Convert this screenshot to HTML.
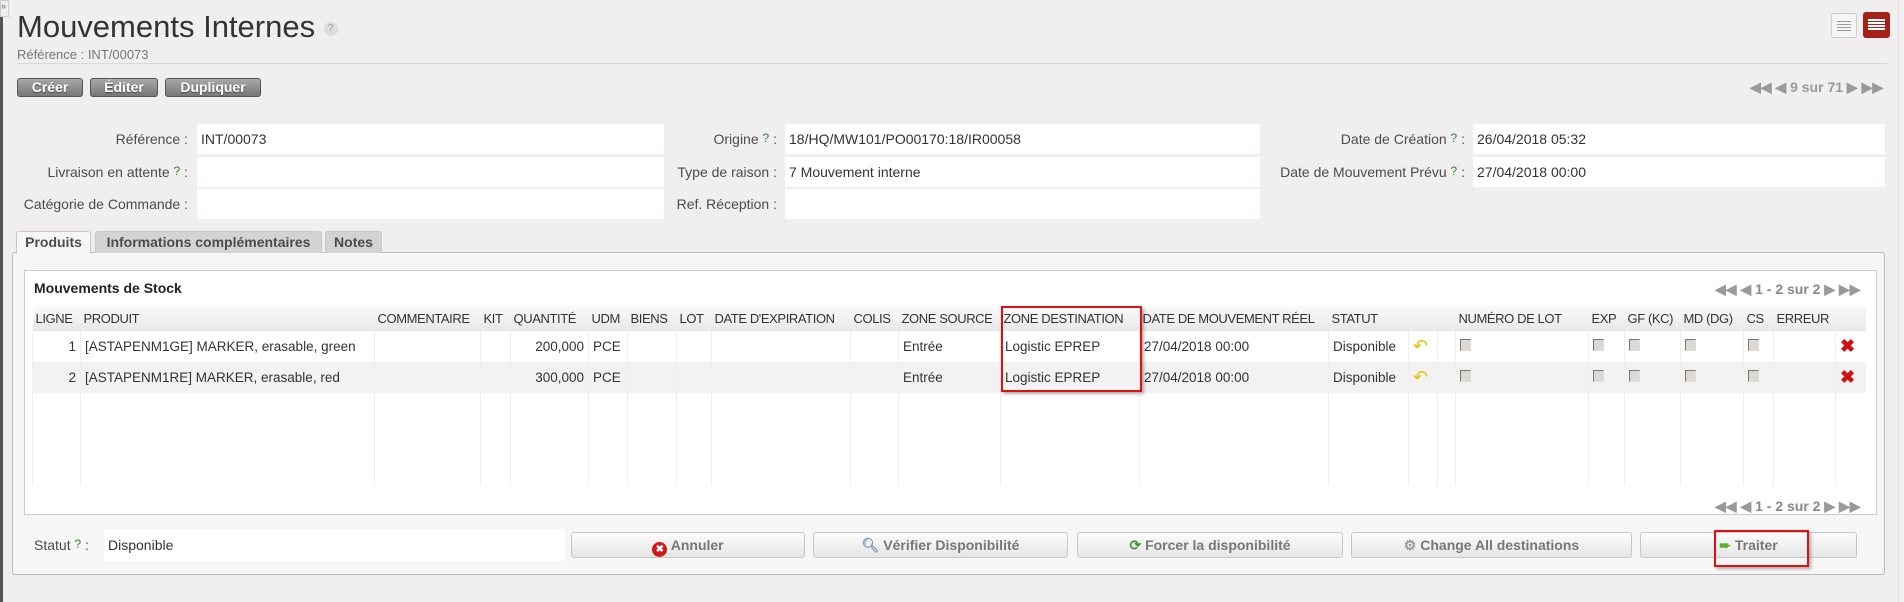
<!DOCTYPE html>
<html><head><meta charset="utf-8"><style>
*{box-sizing:border-box;margin:0;padding:0}
body{width:1904px;height:602px;background:#f0eeee;font-family:"Liberation Sans",sans-serif;font-size:14px;color:#4c4c4c;position:relative;overflow:hidden}
.a{position:absolute}
.btn{position:absolute;top:78px;height:19px;border:1px solid #555;border-radius:3px;background:linear-gradient(#a8a8a8,#777);color:#fff;font-weight:bold;font-size:14px;text-align:center;line-height:17px;text-shadow:0 1px 1px #444}
.lbl{position:absolute;text-align:right;font-size:14px;color:#4c4c4c}
.inp{position:absolute;background:#fff;height:30px;line-height:30px;padding-left:4px;font-size:14px;color:#333}
.q{color:#2a8a2a;font-size:12px;vertical-align:top}
.tab{position:absolute;top:231px;height:22px;border:1px solid #c8c8c8;border-bottom:none;border-radius:3px 3px 0 0;background:#d4d2d2;font-weight:bold;font-size:14px;line-height:20px;text-align:center;color:#4c4c4c}
table{border-collapse:collapse;position:absolute;left:32px;top:306px;width:1833px;font-size:13.5px;table-layout:fixed}
th{height:25px;font-weight:normal;text-align:left;padding:0 3px;color:#333;background:linear-gradient(#fafafa,#e8e8e8);white-space:nowrap;font-size:13px;letter-spacing:-0.4px;overflow:hidden}
td{height:31px;border-left:1px solid #eee;padding:0 4px;white-space:nowrap;color:#333;overflow:hidden}
tr.o td{background:#fff}tr.e td{background:#f2f2f2}
.cb{display:inline-block;width:11px;height:12px;border:1px solid #777;background:#ddd8d0;border-right-color:#ddd;border-bottom-color:#ddd}
.bb{position:absolute;top:532px;height:26px;border:1px solid #c8c8c8;border-radius:3px;background:linear-gradient(#fbfbfb,#e6e6e6);color:#777;font-weight:bold;font-size:14px;line-height:24px;text-align:center}
.pg{position:absolute;color:#999;font-size:14px;font-weight:bold}
</style></head><body>
<div class="a" style="left:0;top:0;width:3px;height:602px;background:#555"></div>
<div class="a" style="left:0;top:0;width:9px;height:17px;background:#eee;border:1px solid #ccc;font-size:9px;color:#666">»</div>
<div class="a" style="left:1898px;top:0;width:1px;height:602px;background:#ddd"></div>
<div class="a" style="left:17px;top:9px;font-size:31px;color:#333">Mouvements Internes <span style="display:inline-block;width:14px;height:14px;border-radius:7px;background:#ddd;color:#999;font-size:10px;text-align:center;line-height:14px;vertical-align:middle">?</span></div>
<div class="a" style="left:17px;top:47px;font-size:13px;color:#777">Référence : INT/00073</div>
<div class="a" style="left:17px;top:63px;width:1870px;height:1px;background:#d8d8d8"></div>
<div class="a" style="left:1831px;top:13px;width:26px;height:25px;border:1px solid #ccc;border-radius:3px;background:#f6f6f6"><div style="margin:7px 5px;height:10px;background:repeating-linear-gradient(#999 0 1px,#f6f6f6 1px 3px)"></div></div>
<div class="a" style="left:1863px;top:12px;width:27px;height:26px;border-radius:3px;background:#a52218"><div style="margin:7px 5px;height:11px;background:repeating-linear-gradient(#fff 0 2px,#a52218 2px 3px)"></div></div>
<div class="btn" style="left:17px;width:66px">Créer</div>
<div class="btn" style="left:90px;width:68px">Éditer</div>
<div class="btn" style="left:165px;width:96px">Dupliquer</div>
<div class="pg" style="left:1750px;top:79px">◀◀ ◀ <span style="font-size:14px">9 sur 71</span> ▶ ▶▶</div>

<div class="lbl" style="left:20px;width:168px;top:131px">Référence :</div>
<div class="inp" style="left:197px;top:124px;width:467px">INT/00073</div>
<div class="lbl" style="left:20px;width:168px;top:164px">Livraison en attente <span class="q">?</span> :</div>
<div class="inp" style="left:197px;top:157px;width:467px"></div>
<div class="lbl" style="left:20px;width:168px;top:196px">Catégorie de Commande :</div>
<div class="inp" style="left:197px;top:189px;width:467px"></div>

<div class="lbl" style="left:600px;width:177px;top:131px">Origine <span class="q">?</span> :</div>
<div class="inp" style="left:785px;top:124px;width:475px">18/HQ/MW101/PO00170:18/IR00058</div>
<div class="lbl" style="left:600px;width:177px;top:164px">Type de raison :</div>
<div class="inp" style="left:785px;top:157px;width:475px">7 Mouvement interne</div>
<div class="lbl" style="left:600px;width:177px;top:196px">Ref. Réception :</div>
<div class="inp" style="left:785px;top:189px;width:475px"></div>

<div class="lbl" style="left:1200px;width:265px;top:131px">Date de Création <span class="q">?</span> :</div>
<div class="inp" style="left:1473px;top:124px;width:412px">26/04/2018 05:32</div>
<div class="lbl" style="left:1200px;width:265px;top:164px">Date de Mouvement Prévu <span class="q">?</span> :</div>
<div class="inp" style="left:1473px;top:157px;width:412px">27/04/2018 00:00</div>

<div class="a" style="left:12px;top:252px;width:1873px;height:323px;border:1px solid #bbb;border-radius:3px;background:#f6f6f6"></div>
<div class="tab" style="left:16px;width:75px;background:#f6f6f6;height:23px">Produits</div>
<div class="tab" style="left:95px;width:227px">Informations complémentaires</div>
<div class="tab" style="left:325px;width:57px">Notes</div>

<div class="a" style="left:24px;top:270px;width:1853px;height:245px;border:1px solid #ccc;background:#fff"></div>
<div class="a" style="left:34px;top:280px;font-weight:bold;color:#222;font-size:14px">Mouvements de Stock</div>
<div class="pg" style="left:1715px;top:281px;font-size:14px">◀◀ ◀ <span style="color:#888">1 - 2 sur 2</span> ▶ ▶▶</div>
<div class="pg" style="left:1715px;top:498px;font-size:14px">◀◀ ◀ <span style="color:#888">1 - 2 sur 2</span> ▶ ▶▶</div>

<table>
<colgroup><col style="width:48px"><col style="width:294px"><col style="width:106px"><col style="width:30px"><col style="width:78px"><col style="width:39px"><col style="width:49px"><col style="width:35px"><col style="width:139px"><col style="width:48px"><col style="width:102px"><col style="width:139px"><col style="width:189px"><col style="width:80px"><col style="width:29px"><col style="width:18px"><col style="width:133px"><col style="width:36px"><col style="width:56px"><col style="width:63px"><col style="width:30px"><col style="width:62px"><col style="width:30px"></colgroup>
<tr><th>LIGNE</th><th>PRODUIT</th><th>COMMENTAIRE</th><th>KIT</th><th>QUANTITÉ</th><th>UDM</th><th>BIENS</th><th>LOT</th><th>DATE D'EXPIRATION</th><th>COLIS</th><th>ZONE SOURCE</th><th>ZONE DESTINATION</th><th>DATE DE MOUVEMENT RÉEL</th><th>STATUT</th><th></th><th></th><th>NUMÉRO DE LOT</th><th>EXP</th><th>GF (KC)</th><th>MD (DG)</th><th>CS</th><th>ERREUR</th><th></th></tr>
<tr class="o"><td style="text-align:right">1</td><td>[ASTAPENM1GE] MARKER, erasable, green</td><td></td><td></td><td style="text-align:right">200,000</td><td>PCE</td><td></td><td></td><td></td><td></td><td>Entrée</td><td>Logistic EPREP</td><td>27/04/2018 00:00</td><td>Disponible</td><td style="color:#e8c000;font-size:18px">↶</td><td></td><td><span class="cb"></span></td><td><span class="cb"></span></td><td><span class="cb"></span></td><td><span class="cb"></span></td><td><span class="cb"></span></td><td></td><td style="color:#d01010;font-weight:bold;font-size:18px">✖</td></tr>
<tr class="e"><td style="text-align:right">2</td><td>[ASTAPENM1RE] MARKER, erasable, red</td><td></td><td></td><td style="text-align:right">300,000</td><td>PCE</td><td></td><td></td><td></td><td></td><td>Entrée</td><td>Logistic EPREP</td><td>27/04/2018 00:00</td><td>Disponible</td><td style="color:#e8c000;font-size:18px">↶</td><td></td><td><span class="cb"></span></td><td><span class="cb"></span></td><td><span class="cb"></span></td><td><span class="cb"></span></td><td><span class="cb"></span></td><td></td><td style="color:#d01010;font-weight:bold;font-size:18px">✖</td></tr>
<tr class="o"><td></td><td></td><td></td><td></td><td></td><td></td><td></td><td></td><td></td><td></td><td></td><td></td><td></td><td></td><td></td><td></td><td></td><td></td><td></td><td></td><td></td><td></td><td></td></tr>
<tr class="o"><td></td><td></td><td></td><td></td><td></td><td></td><td></td><td></td><td></td><td></td><td></td><td></td><td></td><td></td><td></td><td></td><td></td><td></td><td></td><td></td><td></td><td></td><td></td></tr>
<tr class="o"><td></td><td></td><td></td><td></td><td></td><td></td><td></td><td></td><td></td><td></td><td></td><td></td><td></td><td></td><td></td><td></td><td></td><td></td><td></td><td></td><td></td><td></td><td></td></tr>
</table>
<div class="a" style="left:1001px;top:306px;width:141px;height:86px;border:2px solid #e01010;box-shadow:2px 2px 3px rgba(0,0,0,.3)"></div>

<div class="a" style="left:34px;top:537px">Statut <span class="q">?</span> :</div>
<div class="inp" style="left:104px;top:529px;width:461px;height:32px;line-height:32px">Disponible</div>
<div class="bb" style="left:571px;width:234px"><span style="display:inline-block;width:15px;height:15px;border-radius:8px;background:#d01818;color:#fff;font-size:10px;line-height:15px;vertical-align:-2px">✖</span> Annuler</div>
<div class="bb" style="left:813px;width:255px"><span style="color:#7a9ab8">🔍︎</span> Vérifier Disponibilité</div>
<div class="bb" style="left:1077px;width:266px"><span style="color:#3a9a2a">⟳</span> Forcer la disponibilité</div>
<div class="bb" style="left:1351px;width:281px"><span style="color:#999">⚙</span> Change All destinations</div>
<div class="bb" style="left:1640px;width:217px"><span style="color:#5ab030">➨</span> Traiter</div>
<div class="a" style="left:1714px;top:530px;width:95px;height:37px;border:2px solid #e01010;box-shadow:2px 2px 3px rgba(0,0,0,.3)"></div>
</body></html>
